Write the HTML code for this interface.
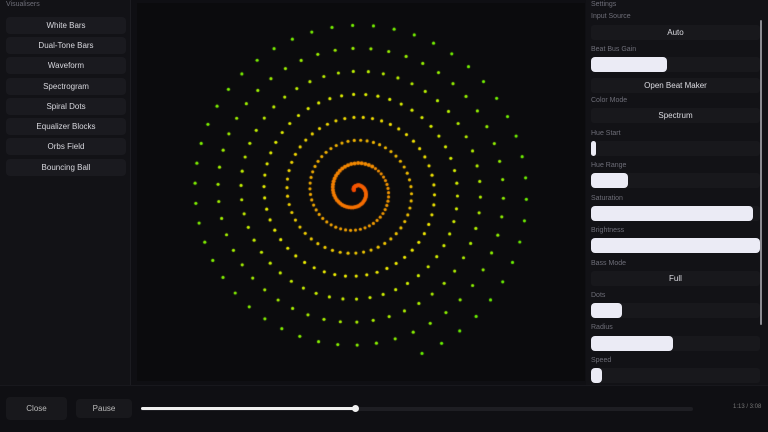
<!DOCTYPE html>
<html><head><meta charset="utf-8"><style>
*{margin:0;padding:0;box-sizing:border-box}
body{width:768px;height:432px;background:#0f0f13;font-family:"Liberation Sans",sans-serif;overflow:hidden;position:relative;color:#ddd}
.lp{position:absolute;left:0;top:0;width:131px;height:385px;background:#121216;border-right:1px solid #1c1c21}
.rp{position:absolute;left:586px;top:0;width:182px;height:385px;background:#121216}
.cv{position:absolute;left:137px;top:3px;width:448px;height:378px;background:#0b0b0d}
.bb{position:absolute;left:0;top:385px;width:768px;height:47px;background:#0f0f13;border-top:1px solid #18181d}
.lbl{position:absolute;font-size:7px;color:#6e6e78}
.btn{position:absolute;left:6px;width:120px;height:17px;background:#1a1a1f;border-radius:4px;font-size:8px;color:#d8d8de;text-align:center;line-height:17px}
.box{position:absolute;left:591px;width:169px;height:15px;background:#18181c;border-radius:3px;font-size:8px;color:#dcdce2;text-align:center;line-height:15px}
.fill{position:absolute;left:0;top:0;height:15px;background:#ebebf5;border-radius:4px}
</style></head><body>
<div class="lp"></div>
<div class="rp"></div>
<div class="cv"><canvas id="c" width="448" height="378"></canvas></div>
<div class="lbl" style="left:6px;top:1px">Visualisers</div>
<div class="btn" style="top:17px">White Bars</div>
<div class="btn" style="top:37px">Dual-Tone Bars</div>
<div class="btn" style="top:57px">Waveform</div>
<div class="btn" style="top:78px">Spectrogram</div>
<div class="btn" style="top:98px">Spiral Dots</div>
<div class="btn" style="top:118px">Equalizer Blocks</div>
<div class="btn" style="top:138px">Orbs Field</div>
<div class="btn" style="top:159px">Bouncing Ball</div>

<div class="lbl" style="left:591px;top:1px">Settings</div>
<div class="lbl" style="left:591px;top:13px">Input Source</div>
<div class="box" style="top:25px">Auto</div>
<div class="lbl" style="left:591px;top:46px">Beat Bus Gain</div>
<div class="box" style="top:57px"><div class="fill" style="width:76px"></div></div>
<div class="box" style="top:78px">Open Beat Maker</div>
<div class="lbl" style="left:591px;top:97px">Color Mode</div>
<div class="box" style="top:108px">Spectrum</div>
<div class="lbl" style="left:591px;top:130px">Hue Start</div>
<div class="box" style="top:141px"><div class="fill" style="width:5px"></div></div>
<div class="lbl" style="left:591px;top:162px">Hue Range</div>
<div class="box" style="top:173px"><div class="fill" style="width:37px"></div></div>
<div class="lbl" style="left:591px;top:195px">Saturation</div>
<div class="box" style="top:206px"><div class="fill" style="width:162px"></div></div>
<div class="lbl" style="left:591px;top:227px">Brightness</div>
<div class="box" style="top:238px"><div class="fill" style="width:169px"></div></div>
<div class="lbl" style="left:591px;top:260px">Bass Mode</div>
<div class="box" style="top:271px">Full</div>
<div class="lbl" style="left:591px;top:292px">Dots</div>
<div class="box" style="top:303px"><div class="fill" style="width:31px"></div></div>
<div class="lbl" style="left:591px;top:324px">Radius</div>
<div class="box" style="top:336px"><div class="fill" style="width:82px"></div></div>
<div class="lbl" style="left:591px;top:357px">Speed</div>
<div class="box" style="top:368px;height:15px"><div class="fill" style="width:11px"></div></div>
<div style="position:absolute;left:760px;top:20px;width:2px;height:305px;background:#8a8a90;border-radius:1px"></div>

<div class="bb"></div>
<div style="position:absolute;left:6px;top:397px;width:61px;height:23px;background:#18181c;border-radius:4px;font-size:8px;color:#bbb;text-align:center;line-height:23px">Close</div>
<div style="position:absolute;left:76px;top:399px;width:56px;height:19px;background:#18181c;border-radius:4px;font-size:8px;color:#bbb;text-align:center;line-height:19px">Pause</div>
<div style="position:absolute;left:141px;top:407px;width:552px;height:4px;background:#1e1e23;border-radius:2px"></div>
<div style="position:absolute;left:141px;top:407px;width:214px;height:3px;background:#f0f0f0;border-radius:2px"></div>
<div style="position:absolute;left:352px;top:405px;width:7px;height:7px;background:#f0f0f0;border-radius:50%"></div>
<div style="position:absolute;left:733px;top:404px;font-size:6px;color:#777">1:13 / 3:08</div>
<script>
var c=document.getElementById('c').getContext('2d');
var cx=355-137,cy=191-3,k=23/(2*Math.PI),n=50;
for(var i=3;i<600;i++){
 var th=i*2*Math.PI/n;var r=k*th; if(r>176)break;
 var t=r/176;var h=16+Math.pow(t,0.8)*78;
 var x=cx-r*Math.cos(th+0.3),y=cy-r*Math.sin(th+0.3);
 c.fillStyle='hsl('+h+',100%,48%)';
 c.beginPath();c.arc(x,y,r<30?2:1.6,0,7);c.fill();
}
</script>
</body></html>
